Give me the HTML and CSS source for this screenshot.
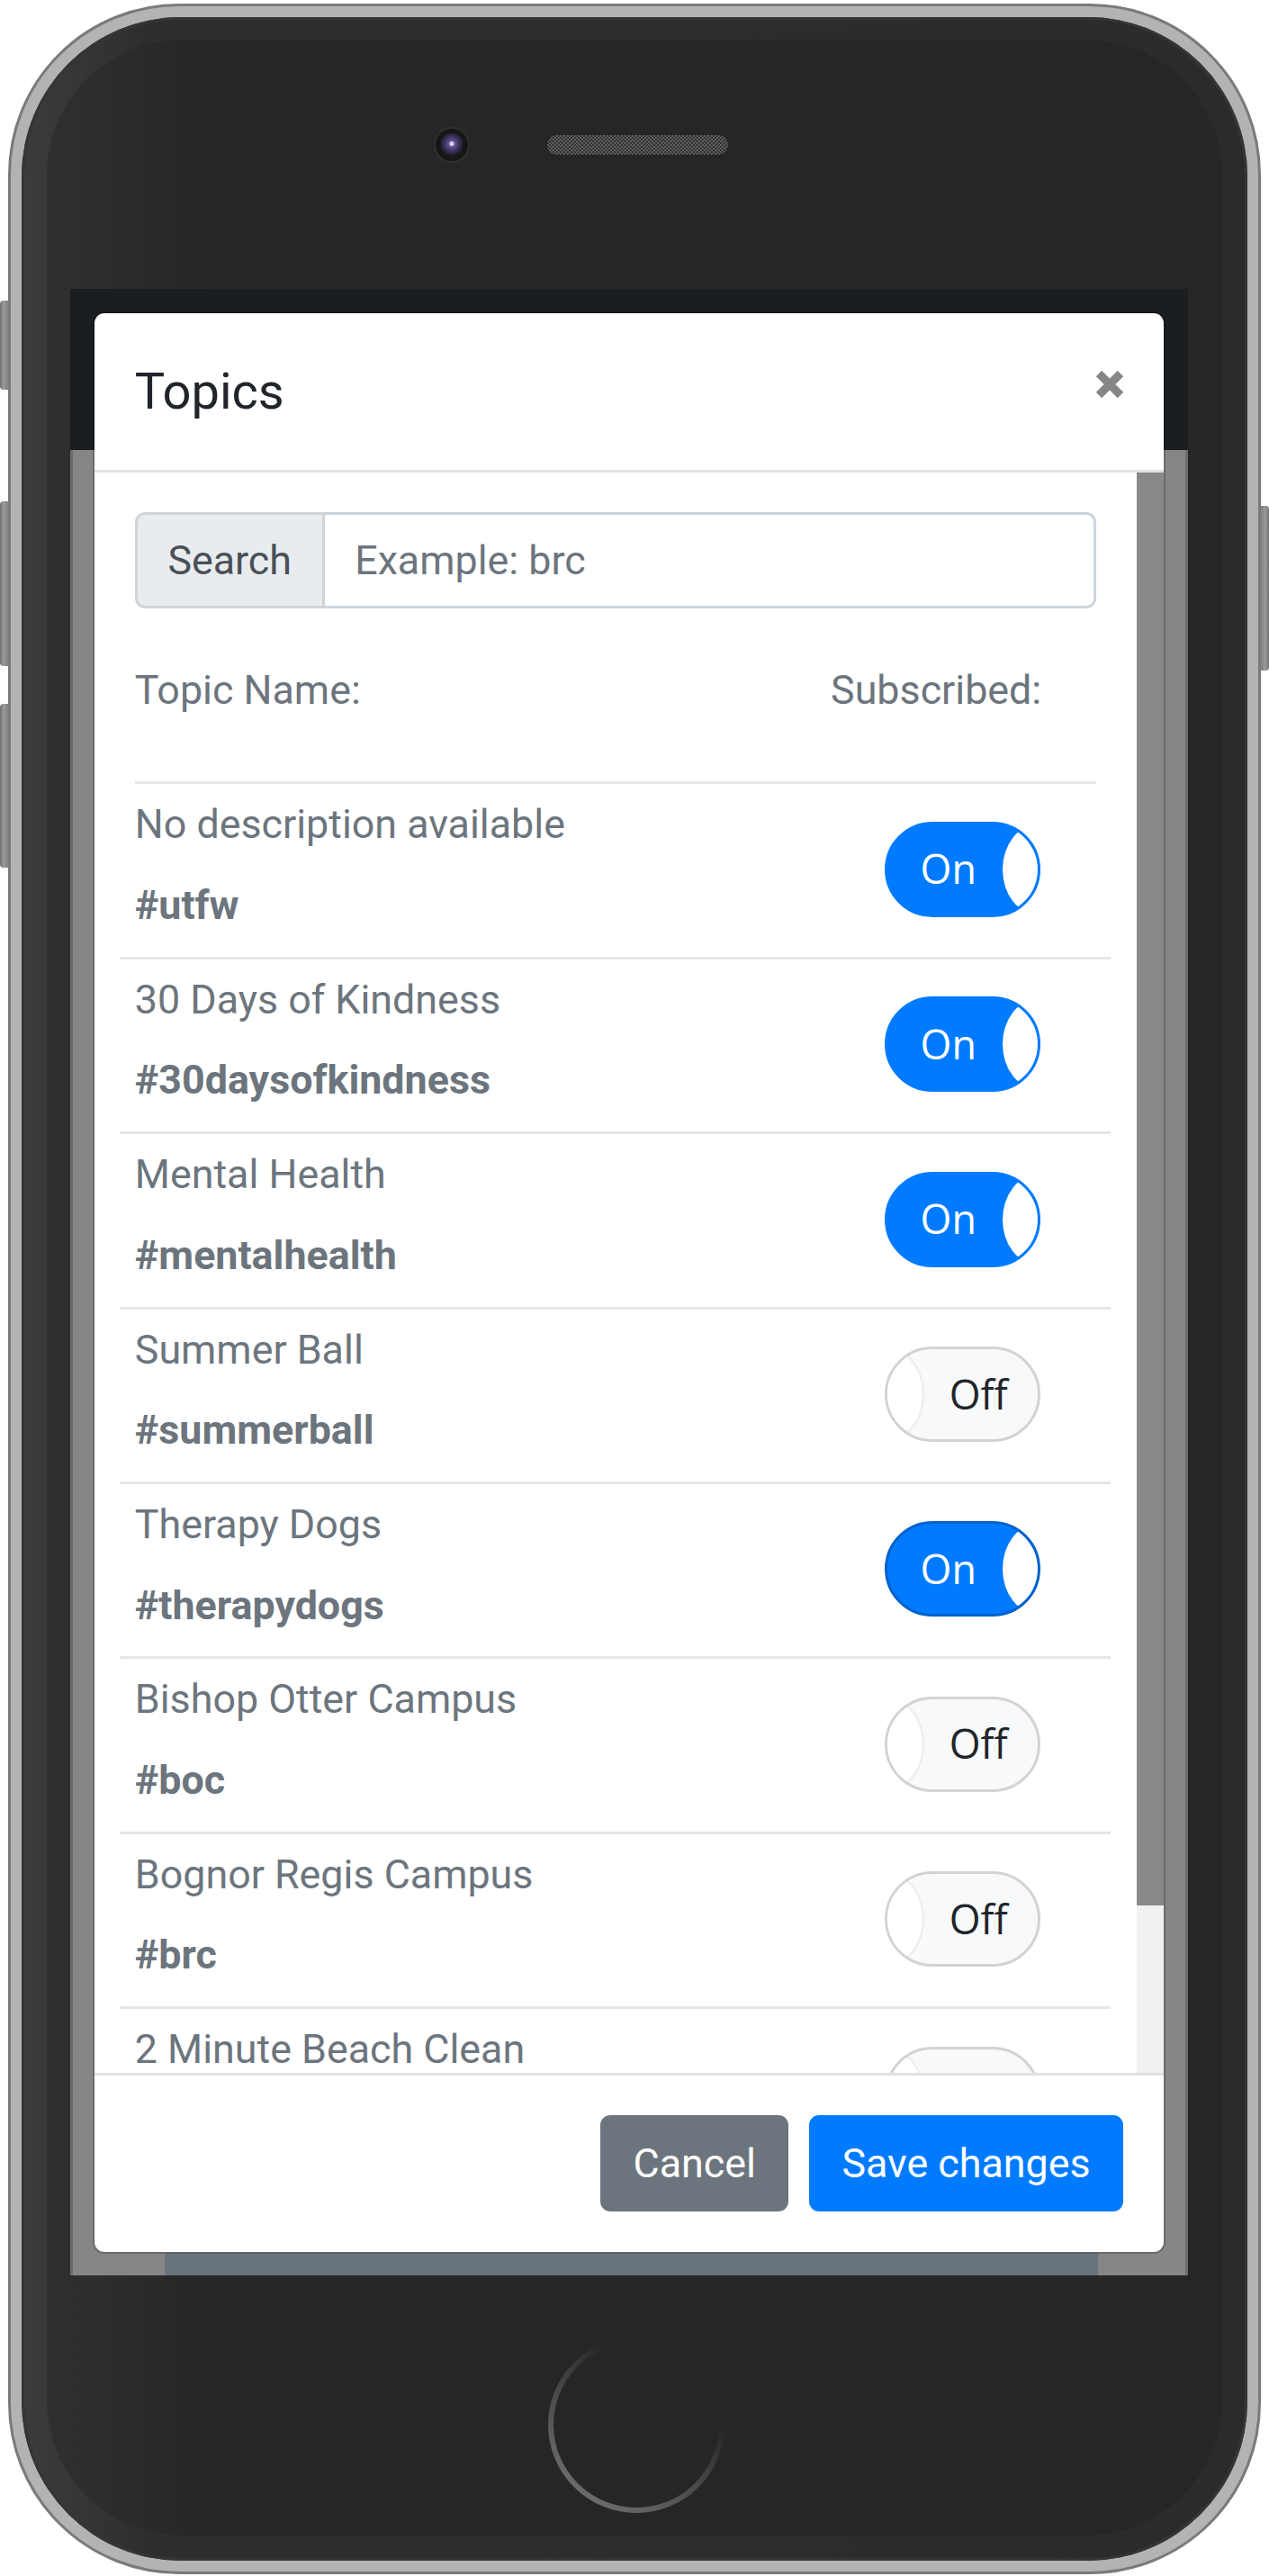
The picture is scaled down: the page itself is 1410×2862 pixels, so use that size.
FILE: index.html
```html
<!DOCTYPE html>
<html lang="en">
<head>
<meta charset="utf-8">
<title>Topics</title>
<link rel="stylesheet" href="styles.css">
</head>
<body>
<div class="device">
  <div class="side side-left">
    <span class="hw-btn hw-mute"></span>
    <span class="hw-btn hw-vol-up"></span>
    <span class="hw-btn hw-vol-down"></span>
  </div>
  <div class="phone">
    <div class="phone-body">
      <div class="phone-inner">
        <div class="sensors">
          <span class="camera"><span class="lens"></span></span>
          <span class="speaker"></span>
        </div>
        <div class="screen">
          <div class="modal">
            <div class="modal-header">
              <h5 class="modal-title">Topics</h5>
              <button class="close" type="button" aria-label="Close">
                <svg width="32" height="32" viewBox="0 0 32 32"><path d="M4 4 L28 28 M28 4 L4 28" stroke="#868686" stroke-width="9" fill="none"/></svg>
              </button>
            </div>
            <div class="modal-body">
              <div class="scroll-content">
                <div class="input-group">
                  <span class="addon">Search</span>
                  <span class="input">Example: brc</span>
                </div>
                <div class="list-head"><span>Topic Name:</span><span>Subscribed:</span></div>
                <hr class="divider">
                <ul class="topics">
                  <li class="topic">
                    <div class="topic-text"><p class="topic-name">No description available</p><h6 class="topic-tag">#utfw</h6></div>
                    <span class="toggle on"><span class="toggle-label">On</span><span class="toggle-handle"></span></span>
                  </li>
                  <li class="topic">
                    <div class="topic-text"><p class="topic-name">30 Days of Kindness</p><h6 class="topic-tag">#30daysofkindness</h6></div>
                    <span class="toggle on"><span class="toggle-label">On</span><span class="toggle-handle"></span></span>
                  </li>
                  <li class="topic">
                    <div class="topic-text"><p class="topic-name">Mental Health</p><h6 class="topic-tag">#mentalhealth</h6></div>
                    <span class="toggle on"><span class="toggle-label">On</span><span class="toggle-handle"></span></span>
                  </li>
                  <li class="topic">
                    <div class="topic-text"><p class="topic-name">Summer Ball</p><h6 class="topic-tag">#summerball</h6></div>
                    <span class="toggle off"><span class="toggle-handle"></span><span class="toggle-label">Off</span></span>
                  </li>
                  <li class="topic">
                    <div class="topic-text"><p class="topic-name">Therapy Dogs</p><h6 class="topic-tag">#therapydogs</h6></div>
                    <span class="toggle on focus"><span class="toggle-label">On</span><span class="toggle-handle"></span></span>
                  </li>
                  <li class="topic">
                    <div class="topic-text"><p class="topic-name">Bishop Otter Campus</p><h6 class="topic-tag">#boc</h6></div>
                    <span class="toggle off"><span class="toggle-handle"></span><span class="toggle-label">Off</span></span>
                  </li>
                  <li class="topic">
                    <div class="topic-text"><p class="topic-name">Bognor Regis Campus</p><h6 class="topic-tag">#brc</h6></div>
                    <span class="toggle off"><span class="toggle-handle"></span><span class="toggle-label">Off</span></span>
                  </li>
                  <li class="topic">
                    <div class="topic-text"><p class="topic-name">2 Minute Beach Clean</p><h6 class="topic-tag topic-tag-hidden"></h6></div>
                    <span class="toggle off"><span class="toggle-handle"></span><span class="toggle-label"></span></span>
                  </li>
                </ul>
              </div>
              <div class="scrollbar"><div class="thumb"></div></div>
            </div>
            <div class="modal-footer">
              <button class="btn btn-secondary" type="button">Cancel</button>
              <button class="btn btn-primary" type="button">Save changes</button>
            </div>
          </div>
        </div>
        <div class="home">
          <svg width="198" height="198" viewBox="0 0 198 198">
            <defs>
              <linearGradient id="ring" gradientUnits="userSpaceOnUse" x1="175" y1="5" x2="45" y2="195">
                <stop offset="0" stop-color="#262626"/>
                <stop offset="0.3" stop-color="#262626"/>
                <stop offset="0.55" stop-color="#444444"/>
                <stop offset="1" stop-color="#707070"/>
              </linearGradient>
            </defs>
            <circle cx="99" cy="99" r="95" fill="none" stroke="url(#ring)" stroke-width="6"/>
          </svg>
        </div>
      </div>
    </div>
  </div>
  <div class="side side-right">
    <span class="hw-btn hw-power"></span>
  </div>
</div>
</body>
</html>
```

FILE: styles.css
```css
* { box-sizing: border-box; }

html, body {
  margin: 0;
  padding: 0;
  background: #ffffff;
}

body {
  font-family: Roboto, "Liberation Sans", Arial, sans-serif;
}

/* ---------- device ---------- */
.device {
  display: flex;
  align-items: flex-start;
  width: 1410px;
  height: 2862px;
  padding-top: 4px;
}

.side {
  width: 9px;
  display: flex;
  flex-direction: column;
}

.hw-btn {
  display: block;
  background: linear-gradient(to right, #6f6f6f 0, #9b9b9b 45%, #808080 100%);
}

.side-left .hw-btn { border-radius: 4px 0 0 4px; }
.side-right .hw-btn { border-radius: 0 4px 4px 0; background: linear-gradient(to left, #6f6f6f 0, #9b9b9b 45%, #808080 100%); }

.hw-mute { margin-top: 330px; height: 99px; }
.hw-vol-up { margin-top: 124px; height: 183px; }
.hw-vol-down { margin-top: 42px; height: 182px; }
.hw-power { margin-top: 558px; height: 183px; }

.phone {
  width: 1392px;
  height: 2856px;
  border: 3px solid #7a7a7a;
  border-radius: 190px;
  background: #b3b3b3;
  padding: 12px;
}

.phone-body {
  height: 100%;
  border-radius: 177px;
  background: linear-gradient(to right, #3c3c3c 0, #2e2e2e 140px, #2b2b2b 100%);
  box-shadow: inset 0 0 0 3px #353535;
  padding: 25px 28px 28px 28px;
}

.phone-inner {
  height: 100%;
  border-radius: 150px;
  background: linear-gradient(to right, #303030 0, #262626 180px, #262626 100%);
  display: flex;
  flex-direction: column;
}

.sensors {
  display: flex;
  align-items: center;
  margin: 99px 0 0 432px;
}

.camera {
  width: 36px;
  height: 36px;
  border-radius: 50%;
  background: #161616;
  box-shadow: 0 0 0 2px #303030;
  display: flex;
  align-items: center;
  justify-content: center;
}

.lens {
  width: 26px;
  height: 26px;
  border-radius: 50%;
  background: radial-gradient(circle at 50% 45%, #d8d0ee 0 2px, #6a5a96 3px, #463a6a 7px, #2a2440 11px, #1a1a1a 13px);
}

.speaker {
  width: 201px;
  height: 22px;
  margin-left: 88px;
  border-radius: 11px;
  background: repeating-conic-gradient(#5e5e5e 0 25%, #323232 0 50%) 0 0 / 4px 4px;
  box-shadow: 0 0 0 1px #222;
}

/* ---------- screen ---------- */
.screen {
  position: relative;
  width: 1242px;
  height: 2207px;
  margin: 142px 0 0 26px;
  background:
    linear-gradient(#6c6c6c, #6c6c6c) 0 179px / 3px 100% no-repeat,
    linear-gradient(#6c6c6c, #6c6c6c) 100% 179px / 3px 100% no-repeat,
    linear-gradient(#68737e, #68737e) 105px 100% / 1037px 25px no-repeat,
    linear-gradient(to bottom, #1b1e21 0, #1b1e21 179px, #868686 179px, #868686 100%);
}

.home {
  margin: 67px 0 0 556px;
  width: 198px;
  height: 198px;
}

.home svg { display: block; }

/* ---------- modal ---------- */
.modal {
  position: absolute;
  left: 25px;
  top: 25px;
  width: 1192px;
  background: #fff;
  background-clip: padding-box;
  border: 2px solid rgba(0, 0, 0, 0.2);
  border-radius: 13px;
  display: flex;
  flex-direction: column;
}

.modal-header {
  display: flex;
  align-items: flex-start;
  justify-content: space-between;
  padding: 44.8px;
  border-bottom: 3px solid #dee2e6;
}

.modal-title {
  margin: 0;
  font-size: 56px;
  font-weight: 400;
  line-height: 84px;
  color: #212529;
}

.close {
  background: none;
  border: 0;
  padding: 0;
  margin: 18px -1px 0 0;
  line-height: 0;
}

.close svg { display: block; }

.modal-body {
  display: flex;
  height: 1778px;
}

.scroll-content {
  flex: 1;
  min-width: 0;
  overflow: hidden;
  padding: 44.8px 44.8px 0 44.8px;
}

.scrollbar {
  width: 30px;
  background: #f1f1f1;
}

.thumb {
  height: 1592px;
  background: #888888;
}

.input-group {
  display: flex;
  height: 106.4px;
  font-size: 44.8px;
  line-height: 67.2px;
}

.addon {
  display: flex;
  align-items: center;
  padding: 0 33.6px;
  background: #e9ecef;
  border: 3px solid #ced4da;
  border-radius: 11.2px 0 0 11.2px;
  color: #495057;
}

.input {
  flex: 1;
  display: flex;
  align-items: center;
  padding: 0 33.6px;
  border: 3px solid #ced4da;
  border-left: 0;
  border-radius: 0 11.2px 11.2px 0;
  color: #6c757d;
  background: #fff;
}

.list-head {
  display: flex;
  justify-content: space-between;
  margin-top: 57.6px;
  padding-right: 61px;
  font-size: 44.8px;
  line-height: 67.2px;
  color: #6c757d;
}

.divider {
  margin: 67.8px 0 0 0;
  border: 0;
  border-top: 3px solid #e6e6e6;
  height: 0;
}

.topics {
  list-style: none;
  margin: 0 -16px 0 -17px;
  padding: 0;
}

.topic {
  display: flex;
  align-items: center;
  justify-content: space-between;
  padding: 11px 78px 23.6px 17px;
  border-top: 3px solid #e6e6e6;
}

.topic:first-child { border-top: 0; }

.topic-name {
  margin: 0 0 22.4px 0;
  font-size: 44.8px;
  line-height: 67.2px;
  color: #6c757d;
}

.topic-tag {
  margin: 0;
  font-size: 44.8px;
  line-height: 67.2px;
  font-weight: 700;
  color: #6c757d;
}

.topic-tag-hidden { height: 67.2px; }

/* ---------- toggle ---------- */
.toggle {
  display: flex;
  align-items: stretch;
  width: 173px;
  height: 106px;
  margin-top: 10px;
  border: 3px solid;
  border-radius: 53px;
  overflow: hidden;
  font-family: "Open Sans", "Noto Sans", sans-serif;
  font-size: 44.8px;
  line-height: 1;
}

.toggle-label {
  flex: 1;
  display: flex;
  align-items: center;
  justify-content: center;
}

.toggle-handle {
  flex: none;
  width: 78px;
  background: #fff;
  border-radius: 50%;
}

.toggle.on {
  background: #007bff;
  border-color: #007bff;
  color: #fff;
}

.toggle.on.focus { border-color: #0062cc; }

.toggle.on .toggle-label { padding-left: 7px; }
.toggle.on .toggle-handle { margin-right: -39px; }

.toggle.off {
  background: #f8f9fa;
  border-color: #d3d3d3;
  color: #212529;
}

.toggle.off .toggle-label { padding-right: 4px; }
.toggle.off .toggle-handle {
  margin-left: -39px;
  box-shadow: 0 0 0 2px #ececec;
}

/* ---------- footer ---------- */
.modal-footer {
  display: flex;
  justify-content: flex-end;
  align-items: center;
  padding: 33.6px;
  border-top: 3px solid #dee2e6;
}

.btn {
  margin: 11.2px;
  padding: 16.8px 33.6px;
  border: 3px solid transparent;
  border-radius: 11.2px;
  font-family: Roboto, "Liberation Sans", Arial, sans-serif;
  font-size: 44.8px;
  line-height: 67.2px;
  font-weight: 400;
  color: #fff;
}

.btn-secondary { background: #6c757d; border-color: #6c757d; }
.btn-primary { background: #007bff; border-color: #007bff; }
```
